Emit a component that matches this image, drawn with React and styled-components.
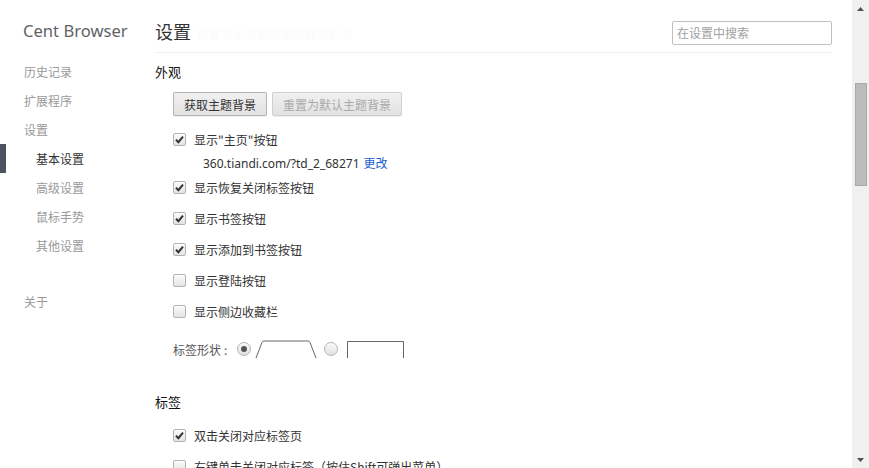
import React from "react";
import styled, { createGlobalStyle } from "styled-components";

const Global = createGlobalStyle`
  html, body { margin: 0; padding: 0; background: #fff; }
  body { font-family: "Noto Sans", "Noto Sans CJK SC", sans-serif; overflow: hidden; }
  #root { height: 100vh; }
`;

const CJK = `"Noto Sans CJK SC", "Noto Sans", sans-serif`;
const LATIN = `"Noto Sans", "Noto Sans CJK SC", sans-serif`;

const Page = styled.div`
  display: grid;
  grid-template-columns: 1fr 17px;
  height: 100vh;
  overflow: hidden;
`;

const Layout = styled.div`
  display: grid;
  grid-template-columns: 155px 1fr;
  overflow: hidden;
`;

const Sidebar = styled.nav`
  display: flex;
  flex-direction: column;
`;

const Brand = styled.div`
  padding: 20px 0 0 23px;
  font-family: ${LATIN};
  font-size: 16.6px;
  line-height: 22px;
  color: #5f6368;
  white-space: nowrap;
  margin-bottom: 15px;
`;

const NavItem = styled.div`
  position: relative;
  height: 29px;
  line-height: 29px;
  padding-left: ${(p) => (p.$sub ? 36 : 24)}px;
  margin-top: ${(p) => p.$gap || 0}px;
  font-family: ${CJK};
  font-size: 12px;
  color: ${(p) => (p.$active ? "#333" : "#999")};
  &::before {
    content: "";
    display: ${(p) => (p.$active ? "block" : "none")};
    position: absolute;
    left: 0;
    top: 0;
    width: 6px;
    height: 29px;
    background: #4b5361;
  }
`;

const Main = styled.main`
  padding-right: 20px;
  display: flex;
  flex-direction: column;
`;

const Header = styled.header`
  display: flex;
  justify-content: space-between;
  align-items: flex-start;
  padding: 20px 0 7px;
  border-bottom: 1px solid #eeeeee;
`;

const Title = styled.h1`
  margin: 0;
  font-family: ${CJK};
  font-weight: normal;
  font-size: 18px;
  line-height: 22px;
  color: #333;
  white-space: nowrap;
`;

const Faint = styled.span`
  margin-left: 6px;
  font-size: 12px;
  color: #fafbfc;
`;

const Search = styled.div`
  margin-top: 1px;
  height: 22px;
  border: 1px solid #bfbfbf;
  border-radius: 2px;
  font-family: ${CJK};
  font-size: 12px;
  line-height: 22px;
  padding-left: 4px;
  box-sizing: content-box;
  width: 154px;
  color: #a0a0a0;
`;

const SectionTitle = styled.h2`
  margin: ${(p) => p.$top}px 0 0;
  font-family: ${CJK};
  font-weight: normal;
  font-size: 13px;
  line-height: 20px;
  color: #111;
`;

const Indent = styled.div`
  padding-left: 18px;
  display: flex;
  flex-direction: column;
`;

const ButtonRow = styled.div`
  display: flex;
  gap: 5px;
  margin-top: 10px;
  margin-bottom: 8px;
`;

const Button = styled.button`
  height: 24px;
  padding: 0 10px;
  font-family: ${CJK};
  font-size: 12px;
  color: ${(p) => (p.disabled ? "#aaa" : "#333")};
  background: linear-gradient(#f0f0f0, #e2e2e2);
  border: 1px solid ${(p) => (p.disabled ? "#cfcfcf" : "#b4b4b4")};
  border-radius: 2px;
  box-shadow: 0 1px 0 rgba(0, 0, 0, 0.06);
  cursor: default;
`;

const Row = styled.label`
  display: flex;
  align-items: center;
  gap: 8px;
  height: ${(p) => p.$h || 31}px;
  margin-top: ${(p) => p.$top || 0}px;
  font-family: ${CJK};
  font-size: 12px;
  color: #333;
  white-space: nowrap;
`;

const Box = styled.span`
  width: 11px;
  height: 11px;
  border: 1px solid #b2b2b2;
  border-radius: 2px;
  background: linear-gradient(#fafafa, #e4e4e4);
  box-shadow: inset 0 1px 0 #fff;
  display: flex;
  align-items: center;
  justify-content: center;
  flex: none;
`;

const Check = ({ on }) => (
  <Box>
    {on && (
      <svg width="9" height="9" viewBox="0 0 9 9">
        <path d="M1 4.8 L3.4 7.2 L8 1.6" fill="none" stroke="#333" strokeWidth="2" />
      </svg>
    )}
  </Box>
);

const Url = styled.div`
  height: 16px;
  line-height: 16px;
  margin-bottom: 1px;
  padding-left: 30px;
  font-family: ${LATIN};
  font-size: 12px;
  color: #333;
  white-space: nowrap;
`;

const Link = styled.span`
  margin-left: 4px;
  font-family: ${CJK};
  color: #1b5fcc;
`;

const ShapeRow = styled.div`
  display: flex;
  align-items: center;
  height: 32px;
  margin-top: 6px;
  font-family: ${CJK};
  font-size: 12px;
  color: #555;
`;

const Colon = styled.span`
  margin: 0 10px 0 3px;
`;

const Radio = styled.span`
  width: 12px;
  height: 12px;
  border: 1px solid #b5b5b5;
  border-radius: 50%;
  background: linear-gradient(#fafafa, #e2e2e2);
  display: flex;
  align-items: center;
  justify-content: center;
  margin: ${(p) => p.$m};
  flex: none;
  &::after {
    content: "";
    display: ${(p) => (p.$on ? "block" : "none")};
    width: 6px;
    height: 6px;
    border-radius: 50%;
    background: #555;
  }
`;

const Shape = styled.svg`
  display: block;
  align-self: flex-end;
  margin-bottom: 7px;
`;

const Scrollbar = styled.div`
  background: #f0f0f0;
  display: flex;
  flex-direction: column;
  align-items: center;
`;

const Arrow = styled.div`
  height: 17px;
  width: 17px;
  display: flex;
  align-items: center;
  justify-content: center;
`;

const Thumb = styled.div`
  margin-top: 66px;
  width: 12px;
  height: 103px;
  background: #bcbcbc;
  border: 1px solid #a8a8a8;
  box-sizing: border-box;
  margin-left: 1px;
`;

const Spacer = styled.div`
  flex: 1;
`;

export default function App() {
  return (
    <>
      <Global />
      <Page>
        <Layout>
          <Sidebar>
            <Brand>Cent Browser</Brand>
            <NavItem>历史记录</NavItem>
            <NavItem>扩展程序</NavItem>
            <NavItem>设置</NavItem>
            <NavItem $sub $active>基本设置</NavItem>
            <NavItem $sub>高级设置</NavItem>
            <NavItem $sub>鼠标手势</NavItem>
            <NavItem $sub>其他设置</NavItem>
            <NavItem $gap={27}>关于</NavItem>
          </Sidebar>
          <Main>
            <Header>
              <Title>
                设置<Faint>恢复会话可通过加载背景标签</Faint>
              </Title>
              <Search>在设置中搜索</Search>
            </Header>
            <SectionTitle $top={9}>外观</SectionTitle>
            <Indent>
              <ButtonRow>
                <Button>获取主题背景</Button>
                <Button disabled>重置为默认主题背景</Button>
              </ButtonRow>
              <Row>
                <Check on />
                显示"主页"按钮
              </Row>
              <Url>
                360.tiandi.com/?td_2_68271<Link>更改</Link>
              </Url>
              <Row>
                <Check on />
                显示恢复关闭标签按钮
              </Row>
              <Row>
                <Check on />
                显示书签按钮
              </Row>
              <Row>
                <Check on />
                显示添加到书签按钮
              </Row>
              <Row>
                <Check />
                显示登陆按钮
              </Row>
              <Row>
                <Check />
                显示侧边收藏栏
              </Row>
              <ShapeRow>
                标签形状<Colon>:</Colon>
                <Radio $on $m="0 4px 0 0" />
                <Shape width="62" height="18" viewBox="0 0 62 18">
                  <path
                    d="M1 18 L7 2.5 Q7.6 1 9 1 L53 1 Q54.4 1 55 2.5 L61 18"
                    fill="none"
                    stroke="#666"
                    strokeWidth="1"
                  />
                </Shape>
                <Radio $m="0 9px 0 7px" />
                <Shape width="57" height="17" viewBox="0 0 57 17">
                  <path d="M0.5 17 L0.5 0.5 L56.5 0.5 L56.5 17" fill="none" stroke="#666" strokeWidth="1" />
                </Shape>
              </ShapeRow>
            </Indent>
            <SectionTitle $top={27}>标签</SectionTitle>
            <Indent>
              <Row $top={8}>
                <Check on />
                双击关闭对应标签页
              </Row>
              <Row>
                <Check />
                右键单击关闭对应标签（按住Shift可弹出菜单）
              </Row>
            </Indent>
          </Main>
        </Layout>
        <Scrollbar>
          <Arrow>
            <svg width="7" height="4" viewBox="0 0 7 4">
              <path d="M0 4 L3.5 0 L7 4 Z" fill="#505050" />
            </svg>
          </Arrow>
          <Thumb />
          <Spacer />
          <Arrow>
            <svg width="7" height="4" viewBox="0 0 7 4">
              <path d="M0 0 L7 0 L3.5 4 Z" fill="#505050" />
            </svg>
          </Arrow>
        </Scrollbar>
      </Page>
    </>
  );
}
